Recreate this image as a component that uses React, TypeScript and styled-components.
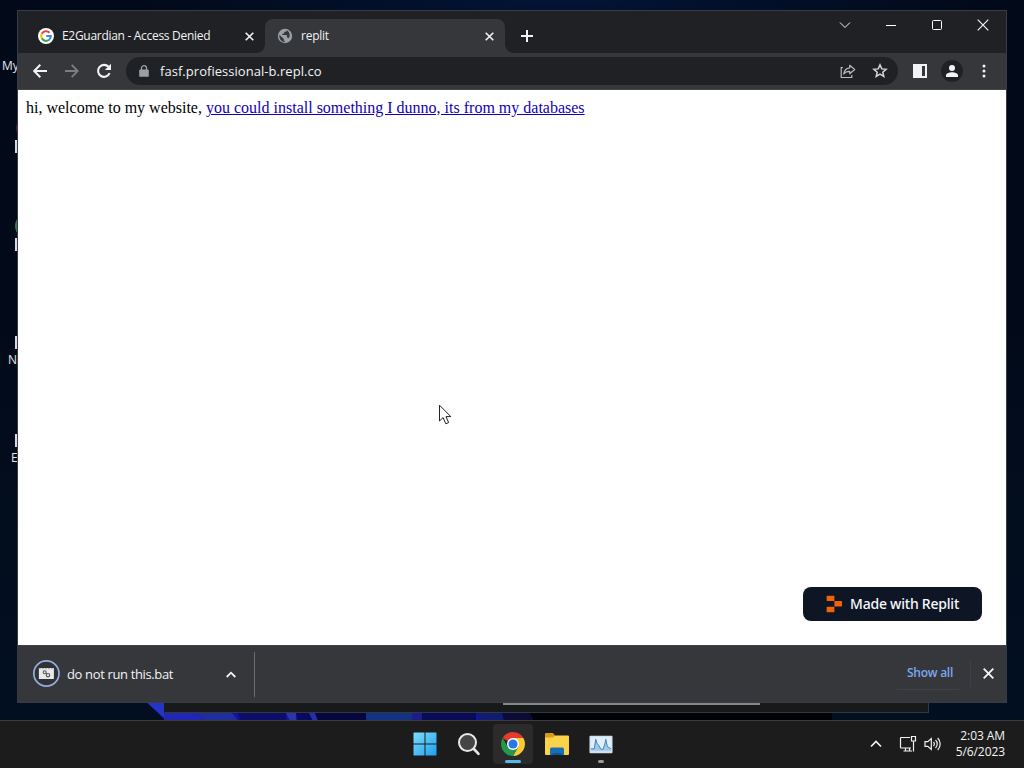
import React from 'react';
import styled, { createGlobalStyle } from 'styled-components';

const GlobalStyle = createGlobalStyle`
  * { box-sizing: border-box; }
  body { margin: 0; background: #010a19; overflow: hidden; }
`;

const UI_FONT = '"Open Sans", "Noto Sans", sans-serif';

const Desktop = styled.div`
  position: relative;
  display: flex;
  flex-direction: column;
  justify-content: flex-end;
  width: 1024px;
  height: 768px;
  overflow: hidden;
  font-family: ${UI_FONT};
  background:
    radial-gradient(ellipse 420px 40px at 560px 0, #021437 0%, transparent 100%),
    linear-gradient(180deg, #020a1a 0%, #020a19 40%, #021022 100%);
`;

const Wallpaper = styled.svg`
  position: absolute;
  left: 0;
  top: 696px;
`;

const DesktopLabel = styled.span<{ $x: number; $y: number }>`
  position: absolute;
  left: ${p => p.$x}px;
  top: ${p => p.$y}px;
  color: #e4e6ea;
  font-size: 12px;
  line-height: 16px;
`;

const ShortcutEdge = styled.i<{ $y: number }>`
  position: absolute;
  left: 15px;
  top: ${p => p.$y}px;
  width: 8px;
  height: 13px;
  background: #d9dbe0;
`;

const IconEdge = styled.i<{ $x: number; $y: number; $color: string }>`
  position: absolute;
  left: ${p => p.$x}px;
  top: ${p => p.$y}px;
  width: 24px;
  height: 24px;
  border-radius: 50%;
  background: ${p => p.$color};
`;

const BackWindow = styled.div`
  position: absolute;
  left: 164px;
  top: 640px;
  width: 765px;
  height: 73px;
  background: #17191b;
  border: 1px solid #34373c;
  border-left-color: #17191b;
`;

const BackWindowEdge = styled.div`
  position: absolute;
  left: 338px;
  top: 62px;
  width: 257px;
  height: 2px;
  background: #85878a;
`;

const BrowserWindow = styled.section`
  position: absolute;
  left: 17px;
  top: 10px;
  width: 990px;
  height: 693px;
  display: flex;
  flex-direction: column;
  border: 1px solid #393c44;
  background: #202124;
`;

const TabStrip = styled.div`
  display: flex;
  height: 42px;
  flex: none;
  align-items: flex-end;
`;

const Tab = styled.div<{ $active?: boolean; $width: number; $pad: number }>`
  position: relative;
  display: flex;
  align-items: center;
  width: ${p => p.$width}px;
  height: 34px;
  padding: 0 9px 0 ${p => p.$pad}px;
  border-radius: 8px 8px 0 0;
  background: ${p => (p.$active ? '#36373b' : 'transparent')};
  color: #f1f3f4;

  &::before,
  &::after {
    content: '';
    display: ${p => (p.$active ? 'block' : 'none')};
    position: absolute;
    bottom: 0;
    width: 8px;
    height: 8px;
  }
  &::before {
    left: -8px;
    background: radial-gradient(circle at 0 0, transparent 7.5px, #36373b 8px);
  }
  &::after {
    right: -8px;
    background: radial-gradient(circle at 100% 0, transparent 7.5px, #36373b 8px);
  }
`;

const TabTitle = styled.span<{ $spacing: number }>`
  flex: 1;
  margin-left: 8px;
  font-size: 12px;
  line-height: 16px;
  white-space: nowrap;
  letter-spacing: ${p => p.$spacing}px;
`;

const IconBox = styled.span<{ $w: number; $h?: number; $color?: string }>`
  display: flex;
  flex: none;
  align-items: center;
  justify-content: center;
  width: ${p => p.$w}px;
  height: ${p => p.$h ?? p.$w}px;
  color: ${p => p.$color ?? '#f1f3f4'};
  svg { display: block; flex: none; }
`;

const WindowControls = styled.div`
  display: flex;
  align-self: flex-start;
  margin-left: auto;
`;

const Toolbar = styled.div`
  display: flex;
  flex: none;
  align-items: center;
  height: 37px;
  padding: 0 6px;
  background: #36373b;
  border-bottom: 1px solid #46474a;
`;

const AddressBar = styled.div`
  display: flex;
  flex: 1;
  align-items: center;
  height: 28px;
  margin: 0 6px;
  padding: 0 2px 0 9px;
  border-radius: 14px;
  background: #202124;
`;

const Url = styled.span`
  flex: 1;
  margin-left: 7px;
  font-size: 13px;
  line-height: 18px;
  color: #f1f3f4;
  letter-spacing: 0.04px;
`;

const Avatar = styled.span`
  display: flex;
  align-items: center;
  justify-content: center;
  width: 22px;
  height: 22px;
  border-radius: 50%;
  background: #202124;
`;

const Page = styled.main`
  flex: 1;
  display: flex;
  flex-direction: column;
  justify-content: space-between;
  padding: 9px 24px 24px 8px;
  background: #fff;
  color: #000;
  font: 16px/18px "Liberation Serif", serif;
`;

const Intro = styled.p`
  margin: 0;
  white-space: nowrap;
  a { color: #1200b4; text-decoration: underline; }
`;

const ReplitBadge = styled.div`
  display: flex;
  align-self: flex-end;
  align-items: center;
  width: 179px;
  height: 34px;
  padding-left: 23px;
  gap: 7px;
  border-radius: 8px;
  background: #0e1525;
  color: #f5f9fc;
  font: 500 14px/20px "Noto Sans", "Open Sans", sans-serif;
  letter-spacing: -0.22px;
  white-space: nowrap;
`;

const DownloadBar = styled.footer`
  display: flex;
  flex: none;
  align-items: center;
  height: 57px;
  background: #36373b;
  border-top: 1px solid #404145;
`;

const DownloadItem = styled.div`
  display: flex;
  align-items: center;
  width: 237px;
  height: 45px;
  padding-left: 14px;
  border-right: 1px solid #6c6d71;
  color: #f1f3f4;
`;

const FileName = styled.span`
  flex: 1;
  margin-left: 7px;
  font-size: 13px;
  line-height: 18px;
  letter-spacing: -0.36px;
`;

const ShowAll = styled.button`
  width: 66px;
  height: 32px;
  margin: 0 9px 0 auto;
  padding: 0 0 1px 4px;
  border: 0;
  border-bottom: 1px solid #404247;
  border-radius: 4px;
  background: transparent;
  color: #7ba7ec;
  font: 600 12px/16px ${UI_FONT};
  letter-spacing: -0.25px;
  white-space: nowrap;
`;

const BarEnd = styled.div`
  display: flex;
  align-items: center;
  width: 36px;
  height: 26px;
  padding-bottom: 2px;
  border-left: 1px solid #3c4049;
`;

const Taskbar = styled.nav`
  position: relative;
  display: grid;
  grid-template-columns: 1fr 216px 1fr;
  align-items: center;
  height: 48px;
  padding-bottom: 1px;
  background: #1c1c1c;
  border-top: 1px solid #3a3a3f;
`;

const TaskButtons = styled.div`
  grid-column: 2;
  display: flex;
  gap: 4px;
  padding-left: 1px;
`;

const TaskButton = styled.div<{ $active?: boolean; $running?: boolean }>`
  position: relative;
  display: flex;
  flex: none;
  align-items: center;
  justify-content: center;
  width: 40px;
  height: 40px;
  border-radius: 4px;
  background: ${p => (p.$active ? '#2b2b2b' : 'transparent')};

  &::after {
    content: '';
    display: ${p => (p.$active || p.$running ? 'block' : 'none')};
    position: absolute;
    bottom: 1px;
    left: ${p => (p.$active ? 12 : 17)}px;
    width: ${p => (p.$active ? 16 : 6)}px;
    height: 3px;
    border-radius: 2px;
    background: ${p => (p.$active ? '#5ab5ea' : '#9a9a9a')};
  }
`;

const Tray = styled.div`
  grid-column: 3;
  display: flex;
  align-items: center;
  justify-content: flex-end;
  padding-right: 19px;
`;

const Clock = styled.div`
  width: 56px;
  margin-left: 8px;
  color: #f4f4f4;
  font-size: 12px;
  line-height: 16px;
  text-align: right;
  letter-spacing: -0.08px;
  white-space: nowrap;
`;

const Pointer = styled.svg`
  position: absolute;
  left: 438px;
  top: 404px;
`;

const Cross = ({ size, weight }: { size: number; weight: number }) => (
  <svg width={size} height={size} viewBox={`0 0 ${size} ${size}`} fill="none" stroke="currentColor" strokeWidth={weight}>
    <path d={`M.7 .7L${size - 0.7} ${size - 0.7}M${size - 0.7} .7L.7 ${size - 0.7}`} />
  </svg>
);

const GoogleIcon = () => (
  <svg width="16" height="16" viewBox="0 0 16 16" fill="none" strokeWidth="2.1">
    <circle cx="8" cy="8" r="8" fill="#fff" />
    <path d="M11.5 4.7A4.8 4.8 0 0 0 3.8 5.7" stroke="#ea4335" />
    <path d="M3.8 5.7A4.8 4.8 0 0 0 3.8 10.3" stroke="#fbbc05" />
    <path d="M3.8 10.3A4.8 4.8 0 0 0 11.1 11.7" stroke="#34a853" />
    <path d="M11.1 11.7A4.8 4.8 0 0 0 12.8 8H8.2" stroke="#4285f4" />
  </svg>
);

const GlobeIcon = () => (
  <svg width="16" height="16" viewBox="0 0 16 16">
    <circle cx="8" cy="8" r="7.2" fill="#9aa0a6" />
    <path d="M2.3 6.8L6.8 11v1.1c0 .7.5 1.2 1.1 1.2v1A6.3 6.3 0 0 1 2.3 6.8zM9.8 2v.5c0 .7-.6 1.3-1.3 1.3H7.2V5c0 .4-.3.7-.7.7H5.3V7h4c.4 0 .7.3.7.7v1.9h.6c.6 0 1 .4 1.2.9A6.2 6.2 0 0 0 9.800 2z" fill="#36373b" />
  </svg>
);

const ShareIcon = () => (
  <svg width="16" height="15" viewBox="0 0 16 15" fill="none" stroke="currentColor" strokeWidth="1.2">
    <path d="M3 3.500H1.200v10h10.600v-2.500" />
    <path d="M9.700 1.300l5 4.200-5 4.200V7.300C6.800 7.300 5.100 8 3.700 10c.4-3.300 2.300-5.700 6-6.200z" strokeLinejoin="round" />
  </svg>
);

const ReplitIcon = () => (
  <svg width="17" height="18" viewBox="0 0 17 18" fill="#f26207">
    <path d="M1.300 .7H7.700a.7.7 0 0 1 .7.7V6H1.300A.7.7 0 0 1 .6 5.300V1.400a.7.7 0 0 1 .7-.7zM8.400 6H15.300a.7.7 0 0 1 .7.7v4a.7.7 0 0 1-.7.7H8.400zM1.300 11.800H8.400v4.800a.7.7 0 0 1-.7.7H1.300a.7.7 0 0 1-.7-.7V12.500a.7.7 0 0 1 .7-.7z" />
  </svg>
);

const BatchFileIcon = () => (
  <svg width="28" height="28" viewBox="-.4 .5 28 28">
    <circle cx="14" cy="14" r="12.600" fill="#303238" stroke="#95aedb" strokeWidth="1.700" />
    <rect x="6.500" y="8.500" width="15" height="11" rx=".5" fill="#e9e9e9" />
    <path d="M6.500 9.200h15" stroke="#aaa" strokeDasharray="2 1" />
    <circle cx="12.300" cy="12.800" r="1.500" fill="none" stroke="#55585d" strokeWidth="1.100" />
    <circle cx="15.600" cy="15.700" r="1.700" fill="none" stroke="#55585d" strokeWidth="1.200" />
    <path d="M13.300 14L14.500 14.600" stroke="#55585d" />
  </svg>
);

const ChromeIcon = () => (
  <svg width="24" height="24" viewBox="0 0 24 24">
    <path d="M12 12L1.610 6A12 12 0 0 1 22.390 6z" fill="#e33b2e" />
    <path d="M12 6H22.390A12 12 0 0 1 12 24L17.200 15z" fill="#fcc934" />
    <path d="M6.800 15L1.610 6A12 12 0 0 0 12 24L17.200 15z" fill="#229a4b" />
    <circle cx="12" cy="12" r="6" fill="#fff" />
    <circle cx="12" cy="12" r="4.600" fill="#2a78e8" />
  </svg>
);

const FolderIcon = () => (
  <svg width="26" height="24" viewBox="0 0 26 24">
    <path d="M1 2a1 1 0 0 1 1-1h7l2 2.500V8H1z" fill="#d99a1b" />
    <path d="M1 5.500h8l2-2h13a1 1 0 0 1 1 1V22a1 1 0 0 1-1 1H2a1 1 0 0 1-1-1z" fill="#fbd34b" />
    <path d="M6 23v-6a1.500 1.500 0 0 1 1.500-1.500h11A1.500 1.500 0 0 1 20 17v6z" fill="#1570b8" />
    <path d="M8.500 21h9v2h-9z" fill="#0d5797" />
  </svg>
);

const MonitorIcon = () => (
  <svg width="24" height="19" viewBox="0 0 25 19">
    <rect x=".5" y=".5" width="24" height="18" rx="1" fill="#cfe2ef" />
    <rect x="2" y="2" width="21" height="14" fill="#e2eff8" />
    <path d="M2 14h3L7 4l1.500 4 2 3 2 3 2 1L16.500 9l1-5 2 8 3.500 2v2H2z" fill="#9ec9e8" />
    <path d="M2 14h3.500L7 4l1.500 4.500 2 2.500 1.500 3 2.500 .8L16.500 9l1-5 1.500 7.500 4 2.500" fill="none" stroke="#3c86bd" strokeWidth="1" />
  </svg>
);

export default function App() {
  return (
    <Desktop>
      <GlobalStyle />
      <Wallpaper width="1024" height="25" viewBox="0 0 1024 25">
        <path d="M142 1H540V25H166z" fill="#10169a" />
        <path d="M145 5H168V22H164z" fill="#2434c4" />
        <path d="M164 17H197L205 25H164z" fill="#2226b4" />
        <path d="M197 17H232L238 25H205z" fill="#202d9c" />
        <path d="M238 17H286V25H240z" fill="#0b0d69" />
        <path d="M286 17H296V25H290z" fill="#2c36a8" />
        <path d="M296 17H309L313 25H298z" fill="#070a60" />
        <path d="M309 17H315L318 25H313z" fill="#2430a8" />
        <path d="M315 17H366V25H318z" fill="#050640" />
        <path d="M366 17H412V25H366z" fill="#123384" />
        <path d="M412 17H422V25H412z" fill="#1c1d86" />
        <path d="M422 17H476V25H422z" fill="#090b58" />
        <path d="M476 17H502V25H482z" fill="#101c70" />
        <path d="M502 17H530L536 25H504z" fill="#0a0c36" />
        <path d="M530 17H832V25H534z" fill="#010108" />
      </Wallpaper>
      <DesktopLabel $x={2} $y={58}>My</DesktopLabel>
      <DesktopLabel $x={8} $y={352}>N</DesktopLabel>
      <DesktopLabel $x={11} $y={450}>E</DesktopLabel>
      <IconEdge $x={16} $y={116} $color="#5c1c2c" />
      <IconEdge $x={15} $y={214} $color="#3c7a4a" />
      <ShortcutEdge $y={140} />
      <ShortcutEdge $y={238} />
      <ShortcutEdge $y={336} />
      <ShortcutEdge $y={434} />

      <BackWindow><BackWindowEdge /></BackWindow>

      <BrowserWindow>
        <TabStrip>
          <Tab $width={247} $pad={20}>
            <GoogleIcon />
            <TabTitle $spacing={-0.3}>E2Guardian - Access Denied</TabTitle>
            <IconBox $w={14}><Cross size={9} weight={1.6} /></IconBox>
          </Tab>
          <Tab $active $width={240} $pad={12}>
            <GlobeIcon />
            <TabTitle $spacing={-0.25}>replit</TabTitle>
            <IconBox $w={14}><Cross size={9} weight={1.6} /></IconBox>
          </Tab>
          <IconBox $w={44} $h={34}>
            <svg width="12" height="12" viewBox="0 0 12 12" stroke="currentColor" strokeWidth="2"><path d="M6 0V12M0 6H12" /></svg>
          </IconBox>
          <WindowControls>
            <IconBox $w={46} $h={28}>
              <svg width="12" height="8" viewBox="0 0 12 8" fill="none" stroke="currentColor"><path d="M1 1.500L6 6.500L11 1.500" /></svg>
            </IconBox>
            <IconBox $w={46} $h={28}>
              <svg width="10" height="2" viewBox="0 0 10 2"><path d="M0 1H10V2H0z" fill="#fff" /></svg>
            </IconBox>
            <IconBox $w={46} $h={28}>
              <svg width="10" height="10" viewBox="0 0 10 10" fill="none" stroke="#fff"><rect x=".5" y=".5" width="9" height="9" rx="1" /></svg>
            </IconBox>
            <IconBox $w={46} $h={28}><Cross size={12} weight={1.2} /></IconBox>
          </WindowControls>
        </TabStrip>

        <Toolbar>
          <IconBox $w={32}>
            <svg width="14" height="14" viewBox="0 0 14 14" fill="none" stroke="currentColor" strokeWidth="2"><path d="M14 7H1.500M7.300 .8L1.200 7l6.100 6.200" /></svg>
          </IconBox>
          <IconBox $w={32} $color="#7c7e82">
            <svg width="14" height="14" viewBox="0 0 14 14" fill="none" stroke="currentColor" strokeWidth="1.800"><path d="M0 7H12.500M6.700 .8L12.800 7l-6.100 6.200" /></svg>
          </IconBox>
          <IconBox $w={32}>
            <svg width="16" height="16" viewBox="0 0 16 16" fill="none"><path d="M13.600 10.200A6 6 0 1 1 12.500 3.800" stroke="currentColor" strokeWidth="2.100" /><path d="M15 .8V7H8.800z" fill="currentColor" /></svg>
          </IconBox>
          <AddressBar>
            <IconBox $w={18} $color="#9aa0a6">
              <svg width="10" height="12" viewBox="0 0 10 12"><path d="M1 4.500H9a.8.8 0 0 1 .8.8V11a.8.8 0 0 1-.8.8H1a.8.8 0 0 1-.8-.8V5.300a.8.8 0 0 1 .8-.8z" fill="currentColor" /><path d="M2.500 5V3a2.500 2.300 0 0 1 5 0V5" fill="none" stroke="currentColor" strokeWidth="1.300" /></svg>
            </IconBox>
            <Url>fasf.profiessional-b.repl.co</Url>
            <IconBox $w={32} $h={28} $color="#b9bbbf"><ShareIcon /></IconBox>
            <IconBox $w={32} $h={28} $color="#d2d4d7">
              <svg width="16" height="16" viewBox="0 0 16 16" fill="none" stroke="currentColor" strokeWidth="1.500"><path d="M8 1.900l1.800 4 4.300.4-3.300 2.900 1 4.300L8 11.200l-3.800 2.300 1-4.300L1.900 6.300l4.300-.4z" /></svg>
            </IconBox>
          </AddressBar>
          <IconBox $w={32}>
            <svg width="14" height="14" viewBox="0 0 14 14" fillRule="evenodd" fill="currentColor"><path d="M0 0H14V14H0zM9 2V12H12V2z" /></svg>
          </IconBox>
          <IconBox $w={32}>
            <Avatar>
              <svg width="12" height="12" viewBox="0 0 12 12" fill="currentColor"><circle cx="6" cy="3" r="3" /><path d="M0 12V10.300C0 8.300 3.500 7.300 6 7.300s6 1 6 3V12z" /></svg>
            </Avatar>
          </IconBox>
          <IconBox $w={32}>
            <svg width="4" height="14" viewBox="0 0 4 14" fill="currentColor"><circle cx="2" cy="2" r="1.500" /><circle cx="2" cy="7" r="1.500" /><circle cx="2" cy="12" r="1.500" /></svg>
          </IconBox>
        </Toolbar>

        <Page>
          <Intro>hi, welcome to my website, <a>you could install something I dunno, its from my databases</a></Intro>
          <ReplitBadge><ReplitIcon />Made with Replit</ReplitBadge>
        </Page>

        <DownloadBar>
          <DownloadItem>
            <BatchFileIcon />
            <FileName>do not run this.bat</FileName>
            <IconBox $w={46}>
              <svg width="10" height="7" viewBox="0 0 10 7" fill="none" stroke="currentColor" strokeWidth="1.800"><path d="M.7 6L5 1.700L9.300 6" /></svg>
            </IconBox>
          </DownloadItem>
          <ShowAll>Show all</ShowAll>
          <BarEnd>
            <IconBox $w={34}><Cross size={11} weight={1.900} /></IconBox>
          </BarEnd>
        </DownloadBar>
      </BrowserWindow>

      <Pointer width="14" height="22" viewBox="0 0 14 22">
        <path d="M1.500 1.200V17L5.100 13.600L7.800 19.800L10.600 18.600L8 12.600H12.800z" fill="#fff" stroke="#222" />
      </Pointer>

      <Taskbar>
        <TaskButtons>
          <TaskButton>
            <svg width="24" height="24" viewBox="0 0 24 24">
              <defs><linearGradient id="win" x1="0" y1="0" x2="1" y2="1"><stop offset="0" stopColor="#7fdcfb" /><stop offset="1" stopColor="#1ea0ec" /></linearGradient></defs>
              <path d="M1 .5H11.500V11.500H.5V1zM12.500 .5H23L23.500 1V11.500H12.500zM.5 12.500H11.500V23.500H1L.5 23zM12.500 12.500H23.500V23L23 23.500H12.500z" fill="url(#win)" />
            </svg>
          </TaskButton>
          <TaskButton>
            <svg width="24" height="24" viewBox="0 0 24 24" fill="none">
              <path d="M16.500 16.500L21.500 21.800" stroke="#e8e8e8" strokeWidth="2.600" strokeLinecap="round" />
              <circle cx="10.500" cy="10.500" r="8.500" fill="#454545" stroke="#e8e8e8" strokeWidth="2" />
            </svg>
          </TaskButton>
          <TaskButton $active><ChromeIcon /></TaskButton>
          <TaskButton><FolderIcon /></TaskButton>
          <TaskButton $running><MonitorIcon /></TaskButton>
        </TaskButtons>
        <Tray>
          <IconBox $w={32}>
            <svg width="12" height="8" viewBox="0 0 12 8" fill="none" stroke="currentColor" strokeWidth="1.700"><path d="M1 6.500L6 1.500L11 6.500" /></svg>
          </IconBox>
          <IconBox $w={32}>
            <svg width="18" height="18" viewBox="0 0 18 18" fill="none" stroke="currentColor" strokeWidth="1.200"><path d="M11 2.500H2.200a.7.700 0 0 0-.7.700V12.300a.7.700 0 0 0 .7.700H12M4.500 16H13M6.500 13V16M10.500 13V16M12.500 1.500H16.500V6H12.500zM14.500 6V16.500" /></svg>
          </IconBox>
          <IconBox $w={17}>
            <svg width="18" height="16" viewBox="0 0 18 16" fill="none" stroke="currentColor" strokeWidth="1.200"><path d="M1 5.700H3.800L7.300 2.500V13.500L3.800 10.300H1zM9.500 6A2.800 2.800 0 0 1 9.500 10M11.500 4A5.500 5.500 0 0 1 11.500 12M13.700 2A8.500 8.500 0 0 1 13.700 14" /></svg>
          </IconBox>
          <Clock>2:03 AM<br />5/6/2023</Clock>
        </Tray>
      </Taskbar>
    </Desktop>
  );
}
